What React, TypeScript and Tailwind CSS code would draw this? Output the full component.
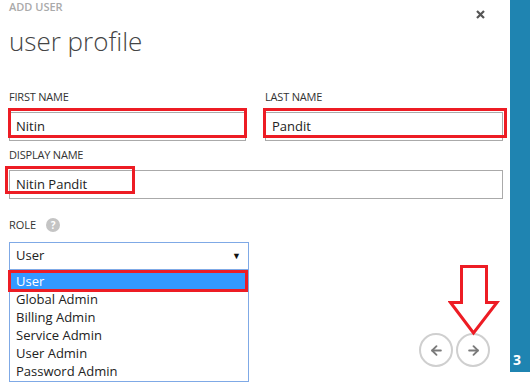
import { ArrowLeft, ArrowRight } from "lucide-react"

const font = { fontFamily: '"Open Sans", "Noto Sans", sans-serif' }

const roles = ["User", "Global Admin", "Billing Admin", "Service Admin", "User Admin", "Password Admin"]

function Field({ label, value }: { label: string; value: string }) {
  return (
    <div className="flex flex-col">
      <div className="text-[11px] leading-[14px] text-[#333] tracking-[-0.2px]">{label}</div>
      <div className="mt-[8px] h-[29px] border border-[#aaa] px-[6px] text-[13px] leading-[27px] text-[#222]">
        {value}
      </div>
    </div>
  )
}

export default function App() {
  return (
    <div className="flex h-[388px] w-[530px] overflow-hidden bg-white" style={font}>
      <div className="relative flex flex-1 flex-col pl-[9px] pr-[7px]">
        {/* header */}
        <div className="flex items-start justify-between">
          <div className="flex flex-col">
            <div className="text-[11px] font-semibold leading-[14px] text-[#aaa]">ADD USER</div>
            <div className="mt-[11px] text-[26px] font-light leading-[32px] text-[#444]">user profile</div>
          </div>
          <svg className="mr-[18px] mt-[10px]" width="9" height="9" viewBox="0 0 9 9">
            <path d="M1 1L8 8M8 1L1 8" stroke="#555" strokeWidth="2.2" />
          </svg>
        </div>

        {/* names */}
        <div className="mt-[33px] grid grid-cols-[237px_1fr] gap-x-[19px]">
          <Field label="FIRST NAME" value="Nitin" />
          <Field label="LAST NAME" value="Pandit" />
        </div>

        <div className="mt-[7px]">
          <Field label="DISPLAY NAME" value="Nitin Pandit" />
        </div>

        {/* role */}
        <div className="mt-[19px] flex items-center gap-[10px]">
          <span className="text-[11px] leading-[14px] text-[#333]">ROLE</span>
          <span className="flex h-[14px] w-[14px] items-center justify-center rounded-full bg-[#c4c4c4] text-[10px] font-bold leading-none text-white">
            ?
          </span>
        </div>

        <div className="relative mt-[10px] w-[240px]">
          <div className="flex h-[28px] items-center justify-between border border-[#7fa9e6] pl-[6px] pr-[7px] text-[13px] text-[#222]">
            <span>User</span>
            <span className="text-[9px] text-[#111]">▼</span>
          </div>
          {/* open dropdown list */}
          <div className="absolute left-0 top-[27px] z-10 w-[240px] border border-[#7fa9e6] bg-white pb-[1px] pt-[2px]">
            {roles.map((r, i) => (
              <div
                key={r}
                className={
                  i === 0
                    ? "h-[18px] bg-[#3399ff] pl-[6px] text-[13px] leading-[18px] text-white"
                    : "h-[18px] pl-[6px] text-[13px] leading-[18px] text-[#222]"
                }
              >
                {r}
              </div>
            ))}
          </div>
        </div>

        {/* wizard nav */}
        <div className="absolute right-[20px] top-[333px] flex gap-[3px]">
          <button className="flex h-[34px] w-[34px] items-center justify-center rounded-full border-2 border-[#cfcfcf] text-[#7a7a7a]">
            <ArrowLeft size={15} strokeWidth={3} />
          </button>
          <button className="flex h-[34px] w-[34px] items-center justify-center rounded-full border-2 border-[#cfcfcf] text-[#7a7a7a]">
            <ArrowRight size={15} strokeWidth={3} />
          </button>
        </div>

        {/* annotations */}
        <div className="pointer-events-none absolute left-[8px] top-[108px] h-[30px] w-[239px] border-[3px] border-[#ed1c24]" />
        <div className="pointer-events-none absolute left-[263px] top-[108px] h-[30px] w-[244px] border-[3px] border-[#ed1c24]" />
        <div className="pointer-events-none absolute left-[5px] top-[166px] h-[28px] w-[130px] border-[3px] border-[#ed1c24]" />
        <div className="pointer-events-none absolute left-[8px] top-[270px] z-20 h-[22px] w-[240px] border-[3px] border-[#ed1c24]" />
        <svg className="pointer-events-none absolute left-[448px] top-[265px]" width="52" height="72" viewBox="0 0 52 72">
          <path
            d="M13.5 1.5H38.5V37.5H49L25.5 68L2.5 37.5H13.5Z"
            fill="white"
            stroke="#ed1c24"
            strokeWidth="3"
            strokeLinejoin="miter"
          />
        </svg>
      </div>

      {/* step rail */}
      <div className="flex h-[372px] w-[20px] flex-col justify-end bg-[#1f84b1] pb-[3px]">
        <span className="pl-[3px] text-[14px] font-bold leading-[18px] text-white">3</span>
      </div>
    </div>
  )
}
